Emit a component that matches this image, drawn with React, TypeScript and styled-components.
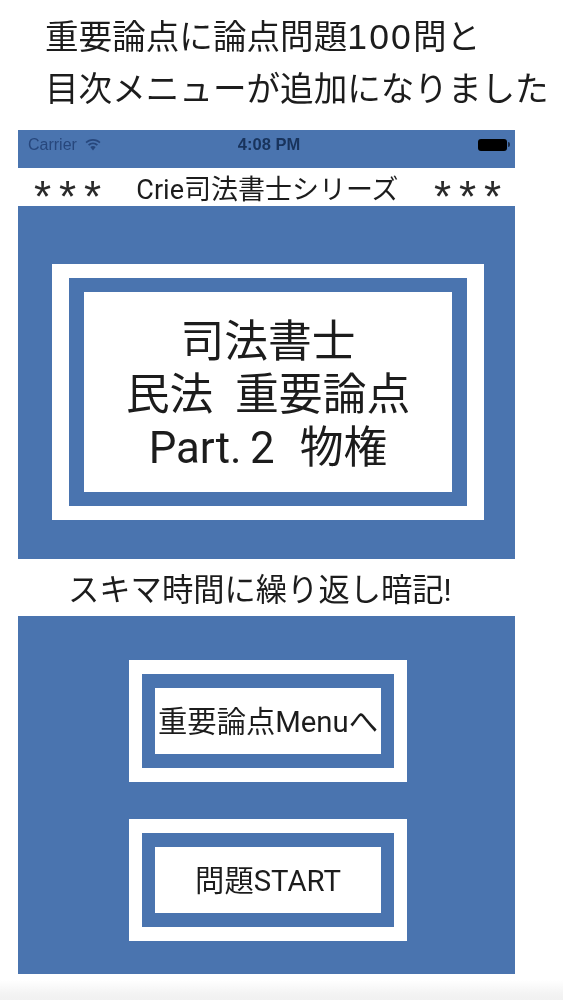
import React from 'react';
import styled, { createGlobalStyle } from 'styled-components';

const BLUE = '#4a74af';
const INK = '#1c1c1c';
const SANS = `Roboto, "Noto Sans CJK JP", sans-serif`;

const GlobalStyle = createGlobalStyle`
  html, body {
    margin: 0;
    padding: 0;
    background: #fff;
  }
`;

const Page = styled.div`
  width: 563px;
  height: 1000px;
  overflow: hidden;
  font-family: ${SANS};
  color: ${INK};
  background: linear-gradient(to bottom, #fff 980px, #f3f3f3 994px, #f1f1f1);
  filter: blur(0.35px);
`;

const Caption = styled.h1`
  margin: 0;
  height: 130px;
  box-sizing: border-box;
  padding: 11px 0 0 45px;
  font-size: 33.6px;
  line-height: 52px;
  font-weight: 400;
  white-space: nowrap;
`;

const CaptionDigits = styled.span`
  font-family: "Liberation Sans", sans-serif;
  font-size: 35.5px;
  letter-spacing: 2.2px;
`;

const Phone = styled.div`
  width: 497px;
  height: 844px;
  margin-left: 18px;
  background: ${BLUE};
  display: flex;
  flex-direction: column;
`;

const StatusBar = styled.div`
  height: 38px;
  box-sizing: border-box;
  padding: 0 5px 9px 10px;
  display: grid;
  grid-template-columns: 1fr auto 1fr;
  align-items: center;
  font-family: "Liberation Sans", sans-serif;
  font-size: 16px;
  color: #27477c;
`;

const Carrier = styled.div`
  display: flex;
  align-items: center;
  gap: 8px;
`;

const Clock = styled.div`
  font-weight: 700;
  font-size: 16.5px;
  color: #18335c;
`;

const Battery = styled.div`
  justify-self: end;
  display: flex;
  align-items: center;
  gap: 1px;
`;

const BatteryBody = styled.div`
  width: 29px;
  height: 12px;
  border-radius: 3px;
  background: #000;
`;

const BatteryTip = styled.div`
  width: 2px;
  height: 5px;
  border-radius: 0 2px 2px 0;
  background: #1a2a44;
`;

const TitleBar = styled.div`
  height: 38px;
  background: #fff;
  display: flex;
  align-items: center;
  justify-content: space-between;
  padding: 0 10px 0 12px;
  font-size: 27px;
  white-space: nowrap;
`;

const Stars = styled.span`
  display: flex;
  width: 75px;
`;

const Star = styled.span`
  width: 25px;
  height: 38px;
  text-align: center;
  font-family: "Liberation Sans", sans-serif;
  font-size: 44px;
  line-height: 58px;
  color: #2a2a2a;
`;

const Tagline = styled.div`
  height: 57px;
  box-sizing: border-box;
  padding: 0 0 0 50px;
  background: #fff;
  display: flex;
  align-items: center;
  font-size: 31.3px;
  white-space: nowrap;
`;

const Hero = styled.section`
  height: 353px;
  box-sizing: border-box;
  padding: 58px 0 0 34px;
`;

const Actions = styled.section`
  flex: 1;
  padding: 44px 0 0 111px;
  display: flex;
  flex-direction: column;
  gap: 37px;
`;

// white ring, blue ring, white face
const Frame = styled.div<{ $width: number; $height: number; $ringX: number; $ringY: number }>`
  width: ${({ $width }) => $width}px;
  height: ${({ $height }) => $height}px;
  box-sizing: border-box;
  background: #fff;
  padding: ${({ $ringY, $ringX }) => `${$ringY}px ${$ringX}px`};
`;

const FrameRing = styled.div<{ $ringX: number; $ringY: number }>`
  height: 100%;
  box-sizing: border-box;
  background: ${BLUE};
  padding: ${({ $ringY, $ringX }) => `${$ringY}px ${$ringX}px`};
`;

const FrameFace = styled.div`
  height: 100%;
  background: #fff;
  display: flex;
  align-items: center;
  justify-content: center;
  text-align: center;
  white-space: pre;
`;

const HeroText = styled.div`
  font-size: 43.8px;
  line-height: 53px;
  padding-top: 6px;
`;

const PartLine = styled.span`
  word-spacing: -2.5px;
`;

const ButtonText = styled.div`
  font-size: 29.3px;
  padding-bottom: 4px;
`;

const WifiIcon = () => (
  <svg width="16" height="12" viewBox="0 0 16 12" fill="#27477c">
    <path d="M8 0C5 0 2.400 1.100 .5 3l1.200 1.300C3.300 2.700 5.500 1.700 8 1.700s4.700 1 6.300 2.600L15.500 3C13.600 1.100 11 0 8 0z" />
    <path d="M8 3.500c-2 0-3.700.8-5 2l1.200 1.300c1-1 2.300-1.600 3.800-1.600s2.800.6 3.800 1.600L13 5.500c-1.300-1.200-3-2-5-2z" />
    <path d="M8 7c-1.100 0-2 .4-2.700 1.100L8 11.500l2.700-3.400C10 7.400 9.100 7 8 7z" />
  </svg>
);

const StarGroup = () => (
  <Stars>
    <Star>*</Star>
    <Star>*</Star>
    <Star>*</Star>
  </Stars>
);

export default function App() {
  return (
    <Page>
      <GlobalStyle />
      <Caption>
        重要論点に論点問題<CaptionDigits>100</CaptionDigits>問と
        <br />
        目次メニューが追加になりました
      </Caption>
      <Phone>
        <StatusBar>
          <Carrier>
            Carrier
            <WifiIcon />
          </Carrier>
          <Clock>4:08 PM</Clock>
          <Battery>
            <BatteryBody />
            <BatteryTip />
          </Battery>
        </StatusBar>
        <TitleBar>
          <StarGroup />
          <span>Crie司法書士シリーズ</span>
          <StarGroup />
        </TitleBar>
        <Hero>
          <Frame $width={432} $height={256} $ringX={17} $ringY={14}>
            <FrameRing $ringX={15} $ringY={14}>
              <FrameFace>
                <HeroText>
                  司法書士
                  <br />
                  民法  重要論点
                  <br />
                  <PartLine>Part. 2   物権</PartLine>
                </HeroText>
              </FrameFace>
            </FrameRing>
          </Frame>
        </Hero>
        <Tagline>スキマ時間に繰り返し暗記!</Tagline>
        <Actions>
          <Frame $width={278} $height={122} $ringX={13} $ringY={14}>
            <FrameRing $ringX={13} $ringY={14}>
              <FrameFace>
                <ButtonText>重要論点Menuへ</ButtonText>
              </FrameFace>
            </FrameRing>
          </Frame>
          <Frame $width={278} $height={122} $ringX={13} $ringY={14}>
            <FrameRing $ringX={13} $ringY={14}>
              <FrameFace>
                <ButtonText>問題START</ButtonText>
              </FrameFace>
            </FrameRing>
          </Frame>
        </Actions>
      </Phone>
    </Page>
  );
}
